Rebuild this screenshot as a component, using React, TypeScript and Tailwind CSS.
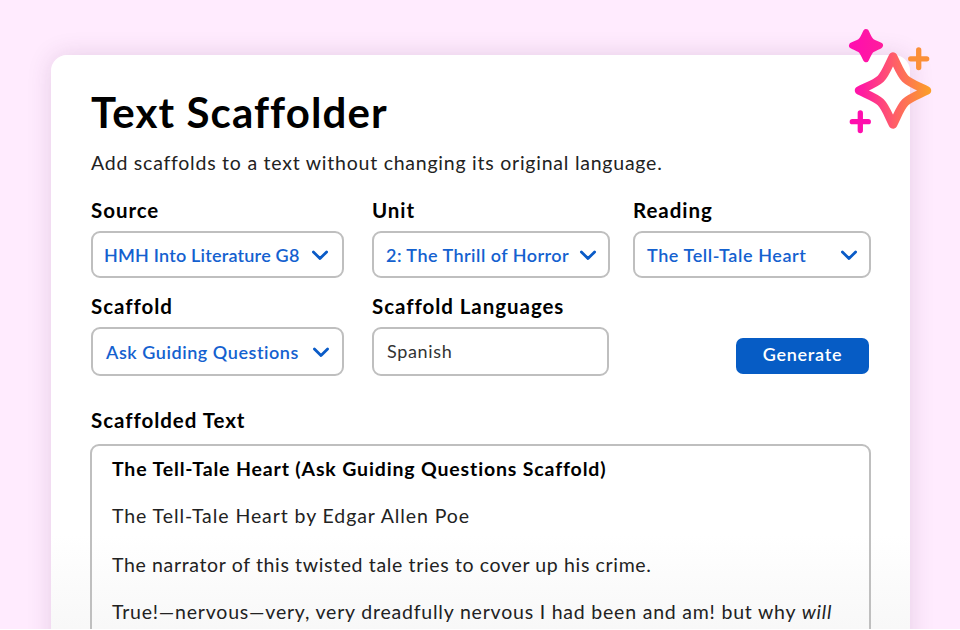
import type { ReactNode } from "react";

function Chevron() {
  return (
    <svg width="18" height="12" viewBox="0 0 18 12" fill="none" aria-hidden="true">
      <path d="M2.4 2.900 9 9.600l6.600-6.700" stroke="#0a5bc7" strokeWidth="2.800" strokeLinecap="round" strokeLinejoin="round" />
    </svg>
  );
}

function Label({ children, className = "" }: { children: ReactNode; className?: string }) {
  return (
    <div className={`h-6 text-[20.500px] leading-[22px] font-bold tracking-[0.95px] whitespace-nowrap text-black ${className}`}>
      {children}
    </div>
  );
}

function SelectBox({ children, className }: { children: ReactNode; className: string }) {
  return (
    <button
      type="button"
      className={`flex items-center justify-between rounded-[9px] border-2 border-[#bfbfbf] bg-white text-[18px] leading-6 font-semibold whitespace-nowrap text-[#1461cf] ${className}`}
    >
      {children}
      <Chevron />
    </button>
  );
}

function Sparkles() {
  return (
    <svg className="absolute top-[25px] left-[844px]" width="92" height="112" viewBox="844 25 92 112" fill="none" aria-hidden="true">
      <defs>
        <linearGradient id="spark" x1="850" y1="0" x2="931" y2="0" gradientUnits="userSpaceOnUse">
          <stop offset="0" stopColor="#ff0db0" />
          <stop offset="0.16" stopColor="#ff1ca0" />
          <stop offset="0.55" stopColor="#ff5f68" />
          <stop offset="1" stopColor="#fba126" />
        </linearGradient>
        <linearGradient id="spark-small" x1="850" y1="0" x2="883" y2="0" gradientUnits="userSpaceOnUse">
          <stop offset="0" stopColor="#ff0db0" />
          <stop offset="1" stopColor="#ff1d9c" />
        </linearGradient>
      </defs>
      <path
        d="M866 32c2.200 5 4 8.500 6 9.800 2 1.300 5 2.200 8 3.700-3 1.500-6 2.700-8 4-2 1.300-3.800 5-6 9.700-2.200-4.700-4-8.400-6-9.700-2-1.300-5-2.500-8-4 3-1.500 6-2.400 8-3.700 2-1.300 3.800-4.800 6-9.800Z"
        fill="url(#spark-small)"
        stroke="url(#spark-small)"
        strokeWidth="6"
        strokeLinejoin="round"
      />
      <path
        d="M893 56.500c4.300 8.500 7.500 17.500 12.300 22.200C910 83.200 919 86.500 927 90.500c-8 4-17 7.200-21.700 11.800C900.500 107 897.300 116 893 124.500c-4.300-8.500-7.500-17.500-12.300-22.200C876 97.700 867 94.500 859 90.500c8-4 17-7.300 21.700-11.800 4.800-4.700 8-13.700 12.300-22.200Z"
        stroke="url(#spark)"
        strokeWidth="8.500"
        strokeLinejoin="round"
      />
      <path d="M918.700 50v17.500M910.700 58.800h16" stroke="#fb8f38" strokeWidth="5.300" strokeLinecap="round" />
      <path d="M860.300 113v17.500M852.300 121.700h16" stroke="#ff0fad" strokeWidth="5.300" strokeLinecap="round" />
    </svg>
  );
}

export default function App() {
  return (
    <main className="relative h-[630px] w-[960px] overflow-hidden bg-white font-['Lato',sans-serif]">
      <div className="h-[629px] overflow-hidden bg-[#ffebfe] pt-[55px] pl-[51px]">
        <section className="h-[640px] w-[859px] rounded-[16px] bg-linear-to-b from-white from-75% to-[#f3f3f3] px-10 pt-8 shadow-[0_0_24px_rgba(80,40,90,0.15)]">
          <h1 className="h-[52px] text-[42px] leading-[50px] font-bold tracking-[1.100px] whitespace-nowrap text-black">Text Scaffolder</h1>
          <p className="mt-3 h-6 text-[19.500px] leading-6 tracking-[0.760px] whitespace-nowrap text-[#222]">
            Add scaffolds to a text without changing its original language.
          </p>

          <div className="mt-6 grid grid-cols-[252px_238px_238px] gap-x-[28px]">
            <div>
              <Label>Source</Label>
              <SelectBox className="mt-2 h-[47px] w-[253px] pr-[13px] pl-[11px] tracking-[0.200px]">HMH Into Literature G8</SelectBox>
            </div>
            <div>
              <Label className="pl-px">Unit</Label>
              <SelectBox className="mt-2 ml-px h-[47px] w-[238px] pr-[11px] pl-[12px] tracking-[0.470px]">2: The Thrill of Horror</SelectBox>
            </div>
            <div className="-ml-1">
              <Label>Reading</Label>
              <SelectBox className="mt-2 h-[47px] w-[238px] pr-[11px] pl-[12px] tracking-[0.600px]">The Tell-Tale Heart</SelectBox>
            </div>
          </div>

          <div className="mt-[17px] flex items-end">
            <div className="w-[281px]">
              <Label>Scaffold</Label>
              <SelectBox className="mt-2 h-[49px] w-[253px] pr-[12px] pl-[13px] tracking-[0.550px]">Ask Guiding Questions</SelectBox>
            </div>
            <div className="w-[364px]">
              <Label>Scaffold Languages</Label>
              <div className="mt-2 flex h-[49px] w-[237px] items-center rounded-[9px] border-2 border-[#bfbfbf] pl-[13px] text-[18px] tracking-[0.650px] text-[#333]">
                Spanish
              </div>
            </div>
            <button type="button" className="mb-[2px] h-9 w-[133px] rounded-[7px] bg-[#065cc5] text-[18px] leading-[33px] font-semibold tracking-[0.700px] text-white">
              <span className="block h-9">Generate</span>
            </button>
          </div>

          <div className="mt-8">
            <Label className="pt-px">Scaffolded Text</Label>
            <article className="mt-3 -ml-px h-[240px] w-[781px] rounded-[9px] border-2 border-[#bfbfbf] px-5 pt-[11px] text-[19.500px] leading-6 whitespace-nowrap text-[#222]">
              <h2 className="font-bold tracking-[0.850px] text-black">The Tell-Tale Heart (Ask Guiding Questions Scaffold)</h2>
              <p className="mt-[23px] tracking-[0.920px]">The Tell-Tale Heart by Edgar Allen Poe</p>
              <p className="mt-[25px] tracking-[0.640px]">The narrator of this twisted tale tries to cover up his crime.</p>
              <p className="mt-[23px] tracking-[0.790px]">
                True!—nervous—very, very dreadfully nervous I had been and am! but why <em>will</em>
              </p>
            </article>
          </div>
        </section>
      </div>
      <Sparkles />
    </main>
  );
}
